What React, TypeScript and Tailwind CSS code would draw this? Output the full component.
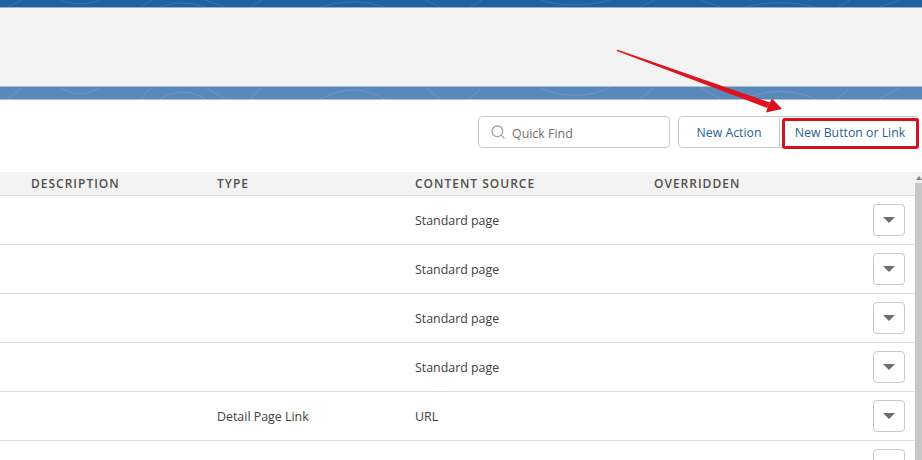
import { Search } from 'lucide-react'

const rows = [
  { type: '', source: 'Standard page' },
  { type: '', source: 'Standard page' },
  { type: '', source: 'Standard page' },
  { type: '', source: 'Standard page' },
  { type: 'Detail Page Link', source: 'URL' },
  { type: '', source: '' },
]

// faint swirl lines of the page header texture
function Texture({ color }: { color: string }) {
  return (
    <svg className="absolute inset-0 h-full w-full" viewBox="0 0 922 13" preserveAspectRatio="none" fill="none" stroke={color} strokeWidth="1">
      <path d="M8 13 L22 0 M60 0 C75 10 85 10 100 0 M140 13 L152 0 M160 13 C175 3 190 3 205 13 M205 0 L225 13 M262 0 L250 13 M320 13 C345 0 360 0 385 13 M425 0 L440 13 M470 13 L482 0 M540 0 C560 12 590 12 610 0 M640 13 L655 0 M700 0 L720 13 M745 13 C770 2 790 2 815 13 M850 0 L838 13 M880 13 L900 0" />
    </svg>
  )
}

export default function App() {
  return (
    <div className="relative h-[460px] w-[922px] overflow-hidden bg-white font-['Open_Sans',sans-serif] text-[12.4px] text-[#3e3e3c]">
      {/* Header bands */}
      <div className="relative h-[7px] overflow-hidden bg-[#1f62a0]">
        <Texture color="#3d7ab4" />
      </div>
      <div className="h-px bg-[#8fb3d6]" />
      <div className="h-[78px] bg-[#f3f3f3]" />
      <div className="h-px bg-[#a9bfd8]" />
      <div className="relative h-[12px] overflow-hidden bg-[#5a88b9]">
        <Texture color="#6f98c3" />
      </div>
      <div className="h-px bg-[#a9c2dc]" />

      {/* Toolbar */}
      <div className="flex h-[72px] items-start justify-end pr-[3px] pt-[16px]">
        <div className="flex h-[32px] w-[192px] items-center rounded border border-[#c9c9c9] bg-white pl-[11px]">
          <Search size={16} strokeWidth={2} className="text-[#a3a3a3]" />
          <span className="ml-[6px] pt-[4px] text-[12.4px] text-[#706e6b]">Quick Find</span>
        </div>
        <div className="ml-[8px] flex h-[32px] text-[12.3px] text-[#2a6199]">
          <div className="flex w-[102px] items-center justify-center rounded-l border border-[#c9c9c9] pt-[3px]">New Action</div>
          <div className="flex w-[139px] items-center justify-center rounded-r border border-l-0 border-[#c9c9c9] pl-[2px] pt-[3px]">New Button or Link</div>
        </div>
      </div>

      {/* Table */}
      <div className="relative pr-[7px]">
        <div className="grid h-[24px] grid-cols-[217px_198px_239px_1fr] items-center border-b border-[#dddbda] bg-[#f3f3f3] text-[12px] font-semibold tracking-[1px] text-[#514f4d]">
          <span className="pl-[31px]">DESCRIPTION</span>
          <span>TYPE</span>
          <span>CONTENT SOURCE</span>
          <span>OVERRIDDEN</span>
        </div>
        {rows.map((row, i) => (
          <div key={i} className="grid h-[49px] grid-cols-[217px_198px_1fr_32px_10px] items-center border-b border-[#dddbda]">
            <span />
            <span className="pt-[3px]">{row.type}</span>
            <span className="pt-[3px]">{row.source}</span>
            <button className="flex h-[32px] w-[32px] items-center justify-center rounded border border-[#c9c9c9] bg-white">
              <span className="h-0 w-0 border-x-[6px] border-t-[6px] border-x-transparent border-t-[#706e6b]" />
            </button>
            <span />
          </div>
        ))}
      </div>

      {/* Scrollbar */}
      <div className="absolute right-0 top-[172px] flex h-[288px] w-[7px] flex-col bg-[#f1f1f1]">
        <div className="h-[11px]">
          <div className="ml-[1px] mt-[4px] h-0 w-0 border-x-[3px] border-b-[4px] border-x-transparent border-b-[#8a8a8a]" />
        </div>
        <div className="flex-1 bg-[#c6c6c6]" />
      </div>

      {/* Screenshot annotation: highlight box and arrow */}
      <div className="absolute left-[782px] top-[118px] h-[31px] w-[137px] rounded-[3px] border-[3px] border-[#d8101e]" />
      <svg className="absolute inset-0" width="922" height="460" fill="none">
        <polygon points="617,49.5 617,51 767,108 770,102.5" fill="#dc1420" />
        <polygon points="772,98.5 782,109 766,112.5 768,106" fill="#d8101e" />
      </svg>
    </div>
  )
}
